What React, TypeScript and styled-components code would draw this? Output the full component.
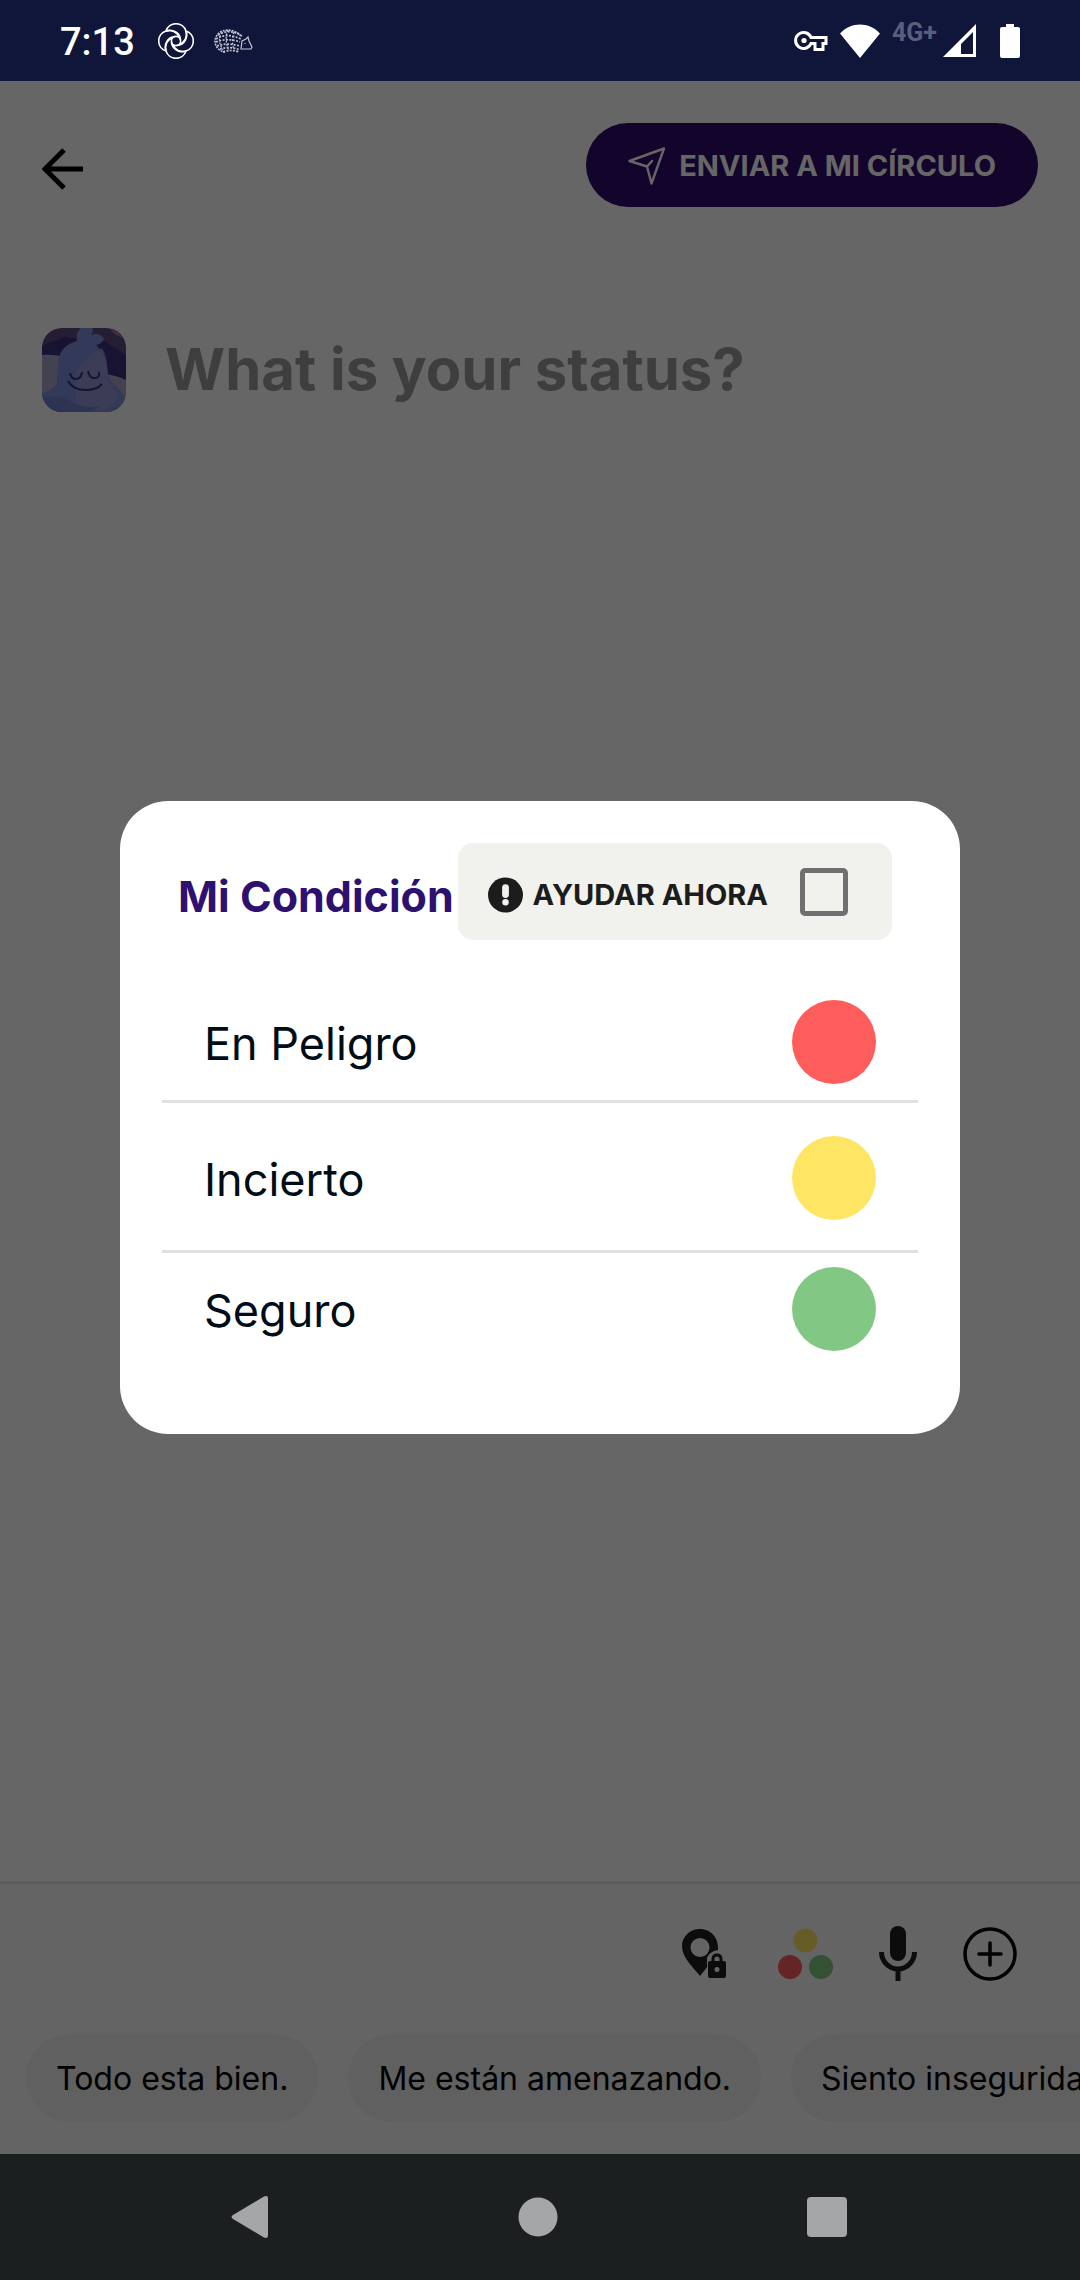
import React from "react";
import styled, { createGlobalStyle } from "styled-components";

const sans = `Inter, "Liberation Sans", sans-serif`;

const GlobalStyle = createGlobalStyle`
  *, *::before, *::after { box-sizing: border-box; }
  body { margin: 0; background: #ffffff; font-family: ${sans}; }
  button { font-family: inherit; border: 0; padding: 0; background: none; cursor: pointer; }
  svg { display: block; flex: none; }
`;

const Screen = styled.div`
  min-height: 100vh;
  display: flex;
  flex-direction: column;
`;

const StatusBar = styled.header`
  height: 81px;
  padding: 0 60px;
  display: flex;
  align-items: center;
  justify-content: space-between;
  background: #10153a;
  color: #ffffff;
`;

const StatusGroup = styled.div<{ $gap: number }>`
  display: flex;
  align-items: center;
  gap: ${(p) => p.$gap}px;
`;

const Clock = styled.time`
  font: 500 38px/44px Roboto, sans-serif;
  margin-right: 3px;
  padding-top: 2px;
`;

const Network = styled.span`
  align-self: flex-start;
  font: 700 25px/18px Roboto, sans-serif;
  color: #5a5e7d;
`;

const Content = styled.main`
  position: relative;
  flex: 1;
  display: flex;
  flex-direction: column;
  background: #ffffff;
`;

const TopBar = styled.div`
  display: flex;
  align-items: center;
  justify-content: space-between;
  padding: 42px 42px 0;
`;

const IconButton = styled.button`
  display: flex;
  align-items: center;
  justify-content: center;
`;

const BackButton = styled(IconButton)`
  padding-top: 8px;
`;

const SendButton = styled.button`
  display: flex;
  align-items: center;
  gap: 13px;
  height: 84px;
  padding: 2px 42px 0;
  border-radius: 42px;
  background: #2d0a6c;
  color: #ffffff;
  font-size: 29px;
  line-height: 36px;
  font-weight: 700;
`;

const Composer = styled.label`
  display: flex;
  align-items: center;
  gap: 39px;
  padding: 121px 42px 0;
`;

const StatusInput = styled.input`
  flex: 1;
  min-width: 0;
  height: 84px;
  border: 0;
  padding: 0 0 2px;
  background: none;
  font-family: ${sans};
  font-size: 58px;
  font-weight: 700;
  color: #1e1e1e;
  &::placeholder { color: #9b9b9b; opacity: 1; }
`;

const Tray = styled.footer`
  margin-top: auto;
  border-top: 3px solid #e6e6e6;
  background: #fafafa;
  overflow: hidden;
`;

const Tools = styled.div`
  display: flex;
  align-items: center;
  justify-content: flex-end;
  gap: 46px;
  height: 150px;
  padding: 0 63px 11px;
`;

const Chips = styled.div`
  display: flex;
  gap: 30px;
  padding: 0 0 32px 26px;
`;

const Chip = styled.button`
  flex: none;
  height: 88px;
  padding: 2px 30px 0;
  border-radius: 44px;
  background: #f0f0f0;
  color: #000000;
  font-size: 32px;
  line-height: 40px;
`;

const Scrim = styled.div`
  position: absolute;
  inset: 0;
  display: flex;
  align-items: center;
  justify-content: center;
  padding: 0 120px;
  background: rgba(0, 0, 0, 0.6);
`;

const Dialog = styled.section`
  flex: 1;
  padding: 42px 42px 71px;
  border-radius: 48px;
  background: #ffffff;
`;

const DialogHeader = styled.div`
  display: flex;
  align-items: center;
  justify-content: space-between;
  padding: 0 26px 0 16px;
  margin-bottom: 44px;
`;

const Title = styled.h1`
  margin: 0;
  padding-top: 8px;
  font-size: 43px;
  line-height: 56px;
  font-weight: 700;
  white-space: nowrap;
  color: #2d1070;
`;

const HelpNow = styled.label`
  display: flex;
  align-items: center;
  gap: 32px;
  height: 97px;
  padding: 0 44px 0 30px;
  border-radius: 15px;
  background: #f1f2ed;
  color: #1c1c1c;
  font-size: 29px;
  line-height: 36px;
  font-weight: 700;
  white-space: nowrap;
`;

const HelpText = styled.span`
  display: flex;
  align-items: center;
  gap: 10px;
  padding-top: 6px;
`;

const Checkbox = styled.input`
  appearance: none;
  width: 48px;
  height: 48px;
  margin: 0;
  border: 5px solid #707070;
  border-radius: 5px;
  &:checked { background: #2d1070; }
`;

const Options = styled.div`
  display: flex;
  flex-direction: column;
`;

const Option = styled.button<{ $top: number; $bottom: number }>`
  display: flex;
  align-items: center;
  justify-content: space-between;
  padding: ${(p) => p.$top}px 42px ${(p) => p.$bottom}px;
  font-size: 45px;
  line-height: 56px;
  color: #000d17;
  &:not(:last-child) { border-bottom: 3px solid #e0e0e0; }
`;

const OptionLabel = styled.span`
  padding-top: 4px;
`;

const Dot = styled.span<{ $color: string }>`
  width: 84px;
  height: 84px;
  border-radius: 50%;
  background: ${(p) => p.$color};
`;

const NavBar = styled.nav`
  height: 126px;
  display: flex;
  align-items: center;
  justify-content: space-between;
  padding: 0 233px 0 231px;
  background: #1c1f20;
`;

const conditions = [
  { label: "En Peligro", color: "#ff5c5c", top: 16, bottom: 16 },
  { label: "Incierto", color: "#ffe564", top: 33, bottom: 30 },
  { label: "Seguro", color: "#82c784", top: 14, bottom: 12 },
];

const messages = ["Todo esta bien.", "Me están amenazando.", "Siento inseguridad."];

const Flower = () => (
  <svg width="36" height="36" viewBox="0 0 36 36" fill="none" stroke="#fff" strokeWidth="1.6">
    <path d="M8 8A10.500 10.500 0 0 1 28 8A10.500 10.500 0 0 1 28 28A10.500 10.500 0 0 1 8 28A10.500 10.500 0 0 1 8 8z" />
    <circle cx="18" cy="18" r="4.600" />
    {[0, 90, 180, 270].map((a) => (
      <path key={a} transform={`rotate(${a} 18 18)`} d="M8 8C14 6 22 9 22.500 17M28 8C30 14 26 20 21.500 21" />
    ))}
  </svg>
);

const Hedgehog = () => (
  <svg width="39" height="24" viewBox="0 0 39 24" fill="none" stroke="#c3c5d3">
    <path d="M27 7C20-1 6-1 2 8c-3 6 1 14 9 15" strokeDasharray="2 1" strokeWidth="1.6" />
    <path d="M4 6c9-5 16-4 24 1M2 10c8-5 16-4 25 0M2 13c8-3 16-3 24 0M3 17c8-3 15-2 23 0M6 20c7-2 13-2 20 1M9 23c6-2 10-2 16 0" strokeDasharray="2 1.4" strokeWidth="1.7" />
    <path d="M8 3c-4 6-3 12 1 18M14 1c-3 7-2 14 1 21M20 3c-2 7-2 12 0 18" strokeDasharray="2 1.6" strokeWidth="1.2" />
    <path d="M27 20l1-8 4-2 2-2 1 4 3 6-1 2zM31 14v1" strokeWidth="1.2" />
  </svg>
);

const Key = () => (
  <svg width="34" height="22" viewBox="0 0 34 22" fill="none" stroke="#fff" strokeWidth="3">
    <path d="M17 7.500h15v6h-3v6h-8v-6h-4a8 8 0 1 1 0-6z" />
    <circle cx="10" cy="10.500" r="2.600" fill="#fff" stroke="none" />
  </svg>
);

const Wifi = () => (
  <svg width="40" height="34" viewBox="0 0 40 34" fill="#fff">
    <path d="M20 34L0 9.500C11-2.500 29-2.500 40 9.500z" />
  </svg>
);

const Signal = () => (
  <svg width="33" height="33" viewBox="0 0 33 33">
    <path fill="#fff" fillRule="evenodd" d="M33 0v33H0zM30 8L18 20v10h12z" />
  </svg>
);

const Battery = () => (
  <svg width="20" height="34" viewBox="0 0 20 34" fill="#fff">
    <path d="M6 0h8v3h4a2 2 0 0 1 2 2v27a2 2 0 0 1-2 2H2a2 2 0 0 1-2-2V5a2 2 0 0 1 2-2h4z" />
  </svg>
);

const BackArrow = () => (
  <svg width="42" height="42" viewBox="0 0 42 42" fill="none" stroke="#000" strokeWidth="5">
    <path d="M22 2L3 21l19 19M3 21h38" />
  </svg>
);

const Plane = () => (
  <svg width="38" height="38" viewBox="0 0 38 38" fill="none" stroke="#fff" strokeWidth="2.4" strokeLinejoin="round" strokeLinecap="round">
    <path d="M1.500 14L36 1.500 23.500 36.500 19 19.500zM19 19.500l5-5.500" />
  </svg>
);

const Avatar = () => (
  <svg width="84" height="84" viewBox="0 0 84 84" role="img" aria-label="Avatar">
    <defs>
      <clipPath id="avatar-shape"><rect width="84" height="84" rx="20" /></clipPath>
    </defs>
    <g clipPath="url(#avatar-shape)">
      <rect width="84" height="84" fill="#5a4a80" />
      <path d="M0 18L22 9l40 4 22 14v26H0z" fill="#3f3080" />
      <path d="M68 0h16v10q-12-1-16-10z" fill="#a0788c" />
      <path d="M0 27q14-1 24 3l-4 54H0z" fill="#a5a6c8" />
      <path d="M62 46q12 1 22 6v32H60z" fill="#a5a6c8" />
      <path d="M16 36C17 22 24 16 35 13 34 6 36 2 39 0h11q2 3-1 7 9-3 13 4-2 5-8 6c8 7 10 15 12 28 0 8 7 12 12 17 7 7 5 16-2 22H0V66c10-6 16-7 15-17z" fill="#7d8ede" />
      <path d="M60 20C47 27 38 35 33 47l1 28 25 9c9-4 17-12 17-20-5-5-10-8-10-16-1-13-1-20-6-28z" fill="#9c9ad0" fillOpacity="0.75" />
      <path d="M0 70q17-4 30 4t28 4q-8 7-24 6H0z" fill="#7080cc" />
      <path d="M28 45q1 6 6 6t6-7M46 43q2 8 7 7 5 0 4-6M26 53q5 9 18 9 11 0 16-6" fill="none" stroke="#3c3078" strokeWidth="2" />
    </g>
  </svg>
);

const Alert = () => (
  <svg width="35" height="36" viewBox="0 0 36 36">
    <circle cx="18" cy="18" r="18" fill="#1c1c1c" />
    <rect x="14.500" y="7" width="7" height="14" rx="3.500" fill="#f1f2ed" />
    <circle cx="18" cy="25.500" r="3.300" fill="#f1f2ed" />
  </svg>
);

const PinLock = () => (
  <svg width="50" height="52" viewBox="0 0 50 52">
    <path fill="#1e1e1e" fillRule="evenodd" d="M18 1C8 1 0 8.500 0 18c0 11 10 20 18 30 3-4 5-6 7-9V31c0-3 3-6 7-8l4-1c1-12-7-21-18-21zm0 9a9.500 9.500 0 1 1 0 19 9.500 9.500 0 0 1 0-19z" />
    <path fill="none" stroke="#1e1e1e" strokeWidth="3" d="M31 35v-4q0-4 4-4t4 4v4" />
    <path fill="#1e1e1e" fillRule="evenodd" d="M28 33h14a2 2 0 0 1 2 2v13a2 2 0 0 1-2 2H28a2 2 0 0 1-2-2V35a2 2 0 0 1 2-2zm7 6a2.500 2.500 0 1 0 0 5 2.500 2.500 0 0 0 0-5z" />
  </svg>
);

const Traffic = () => (
  <svg width="55" height="52" viewBox="0 0 55 52">
    <circle cx="27.500" cy="12.500" r="12" fill="#ffe564" />
    <circle cx="12" cy="39" r="12" fill="#ff5c5c" />
    <circle cx="43" cy="39" r="12" fill="#82c784" />
  </svg>
);

const Mic = () => (
  <svg width="38" height="56" viewBox="0 0 38 56">
    <rect x="11" y="0" width="16" height="35" rx="8" fill="#1e1e1e" />
    <path d="M2.500 26a16.500 17 0 0 0 33 0M19 43v12" fill="none" stroke="#1e1e1e" strokeWidth="5" />
  </svg>
);

const Plus = () => (
  <svg width="54" height="54" viewBox="0 0 54 54" fill="none" stroke="#000" strokeLinecap="round">
    <circle cx="27" cy="27" r="25" strokeWidth="3.500" />
    <path d="M27 16v22M16 27h22" strokeWidth="3.500" />
  </svg>
);

const NavBack = () => (
  <svg width="38" height="44" viewBox="0 0 38 44" fill="#a5a6a8">
    <path d="M2 20L33 1.500q4-1.500 4 2v37q0 3.500-4 2L2 24q-3-2 0-4z" />
  </svg>
);

const NavHome = () => (
  <svg width="40" height="40" viewBox="0 0 40 40" fill="#a5a6a8"><circle cx="20" cy="20" r="19.500" /></svg>
);

const NavRecent = () => (
  <svg width="40" height="40" viewBox="0 0 40 40" fill="#a5a6a8"><rect width="40" height="40" rx="4" /></svg>
);

export default function App() {
  return (
    <Screen>
      <GlobalStyle />
      <StatusBar>
        <StatusGroup $gap={20}>
          <Clock>7:13</Clock>
          <Flower />
          <Hedgehog />
        </StatusGroup>
        <StatusGroup $gap={24}>
          <StatusGroup $gap={12}>
            <Key />
            <Wifi />
            <StatusGroup $gap={6}>
              <Network>4G+</Network>
              <Signal />
            </StatusGroup>
          </StatusGroup>
          <Battery />
        </StatusGroup>
      </StatusBar>
      <Content>
        <TopBar>
          <BackButton aria-label="Volver"><BackArrow /></BackButton>
          <SendButton>
            <Plane />
            ENVIAR A MI CÍRCULO
          </SendButton>
        </TopBar>
        <Composer>
          <Avatar />
          <StatusInput aria-label="Status" placeholder="What is your status?" />
        </Composer>
        <Tray>
          <Tools>
            <IconButton aria-label="Ubicación"><PinLock /></IconButton>
            <IconButton aria-label="Condición"><Traffic /></IconButton>
            <IconButton aria-label="Micrófono"><Mic /></IconButton>
            <IconButton aria-label="Añadir"><Plus /></IconButton>
          </Tools>
          <Chips>
            {messages.map((m) => <Chip key={m}>{m}</Chip>)}
          </Chips>
        </Tray>
        <Scrim>
          <Dialog role="dialog" aria-labelledby="condition-title">
            <DialogHeader>
              <Title id="condition-title">Mi Condición</Title>
              <HelpNow>
                <HelpText>
                  <Alert />
                  AYUDAR AHORA
                </HelpText>
                <Checkbox type="checkbox" />
              </HelpNow>
            </DialogHeader>
            <Options>
              {conditions.map((c) => (
                <Option key={c.label} $top={c.top} $bottom={c.bottom}>
                  <OptionLabel>{c.label}</OptionLabel>
                  <Dot $color={c.color} />
                </Option>
              ))}
            </Options>
          </Dialog>
        </Scrim>
      </Content>
      <NavBar>
        <IconButton aria-label="Atrás"><NavBack /></IconButton>
        <IconButton aria-label="Inicio"><NavHome /></IconButton>
        <IconButton aria-label="Recientes"><NavRecent /></IconButton>
      </NavBar>
    </Screen>
  );
}
